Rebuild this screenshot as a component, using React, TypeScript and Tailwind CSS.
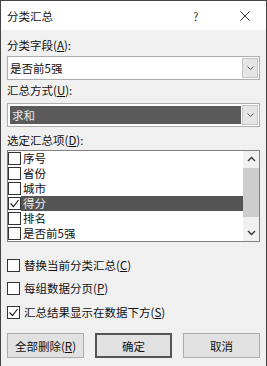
import React from "react";

const font = { fontFamily: '"Noto Sans CJK SC", "Microsoft YaHei", sans-serif' };

function Check() {
  return (
    <svg width="11" height="11" viewBox="0 0 11 11">
      <polyline points="1.5,5.5 4.5,8.5 9.5,2" fill="none" stroke="#222" strokeWidth="1.2" />
    </svg>
  );
}

function Chevron({ up = false }: { up?: boolean }) {
  return (
    <svg width="9" height="6" viewBox="0 0 9 6">
      <polyline
        points={up ? "1,5 4.5,1.5 8,5" : "1,1 4.5,4.5 8,1"}
        fill="none"
        stroke="#333"
        strokeWidth="1.3"
      />
    </svg>
  );
}

function SmallChevron() {
  return (
    <svg width="7" height="4" viewBox="0 0 7 4">
      <polyline points="0.5,0.5 3.5,3.5 6.5,0.5" fill="none" stroke="#555" strokeWidth="1" />
    </svg>
  );
}

function Box({ checked }: { checked?: boolean }) {
  return (
    <div className="w-[13px] h-[13px] border border-[#333] bg-white flex items-center justify-center shrink-0">
      {checked && <Check />}
    </div>
  );
}

export default function App() {
  const items = ["序号", "省份", "城市", "得分", "排名", "是否前5强"];
  return (
    <div
      className="w-[267px] h-[366px] bg-[#f0f0f0] border-l border-r border-t border-[#444] text-[11.5px] text-[#111] flex flex-col"
      style={font}
    >
      <div className="h-[29px] bg-white flex items-center pl-[6px] leading-[14px]">
        <span className="flex-1 pt-[1px]">分类汇总</span>
        <span className="w-[10px] text-[#333] mr-[37px]">?</span>
        <svg width="10" height="10" viewBox="0 0 10 10" className="mr-[16px]">
          <path d="M0.5 0.5 L9.5 9.5 M9.5 0.5 L0.5 9.5" stroke="#333" strokeWidth="1" />
        </svg>
      </div>
      <div className="flex flex-col px-[6px]">
        <div className="mt-[8px] h-[14px] leading-[14px]">
          分类字段(<u>A</u>):
        </div>
        <div className="mt-[4px] h-[24px] border border-[#adadad] bg-white flex">
          <div className="flex-1 flex items-center pl-[2px] leading-[14px]">是否前5强</div>
          <div className="w-[16px] m-[1px] bg-[#e5e5e5] border border-[#c4c4c4] flex items-center justify-center">
            <SmallChevron />
          </div>
        </div>
        <div className="mt-[3px] h-[14px] leading-[14px]">
          汇总方式(<u>U</u>):
        </div>
        <div className="mt-[6px] h-[24px] border border-[#adadad] bg-white flex">
          <div className="flex-1 m-[2px] mr-0 bg-[#5a5a5a] text-[#e8e8e8] flex items-center pl-[2px] leading-[14px]">
            求和
          </div>
          <div className="w-[16px] m-[1px] bg-[#e5e5e5] border border-[#c4c4c4] flex items-center justify-center">
            <SmallChevron />
          </div>
        </div>
        <div className="mt-[6px] h-[14px] leading-[14px]">
          选定汇总项(<u>D</u>):
        </div>
        <div className="mt-[3px] h-[92px] border border-[#828282] bg-white flex">
          <div className="flex-1 flex flex-col">
            {items.map((it) => {
              const sel = it === "得分";
              return (
                <div key={it} className="h-[15px] flex items-center">
                  <Box checked={sel} />
                  <div
                    className={
                      "flex-1 h-[15px] flex items-center pl-[2px] leading-[13px] " +
                      (sel ? "bg-[#555] text-[#eee]" : "")
                    }
                  >
                    {it}
                  </div>
                </div>
              );
            })}
          </div>
          <div className="w-[16px] bg-[#f0f0f0] flex flex-col items-center">
            <div className="h-[16px] flex items-center justify-center">
              <Chevron up />
            </div>
            <div className="w-[16px] h-[49px] mt-[1px] bg-[#cdcdcd]" />
            <div className="flex-1" />
            <div className="h-[16px] flex items-center justify-center">
              <Chevron />
            </div>
          </div>
        </div>
        <div className="mt-[15px] h-[16px] flex items-center gap-[4px] leading-[14px]">
          <Box />
          <span>
            替换当前分类汇总(<u>C</u>)
          </span>
        </div>
        <div className="mt-[7px] h-[16px] flex items-center gap-[4px] leading-[14px]">
          <Box />
          <span>
            每组数据分页(<u>P</u>)
          </span>
        </div>
        <div className="mt-[8px] h-[16px] flex items-center gap-[4px] leading-[14px]">
          <Box checked />
          <span>
            汇总结果显示在数据下方(<u>S</u>)
          </span>
        </div>
        <div className="mt-[13px] grid grid-cols-3 gap-[11px]">
          <div className="h-[25px] bg-[#e1e1e1] border border-[#adadad] flex items-center justify-center leading-[14px]">
            全部删除(<u>R</u>)
          </div>
          <div className="h-[25px] bg-[#e1e1e1] border-2 border-[#555] flex items-center justify-center leading-[14px]">
            确定
          </div>
          <div className="h-[25px] bg-[#e1e1e1] border border-[#adadad] flex items-center justify-center leading-[14px]">
            取消
          </div>
        </div>
      </div>
    </div>
  );
}
